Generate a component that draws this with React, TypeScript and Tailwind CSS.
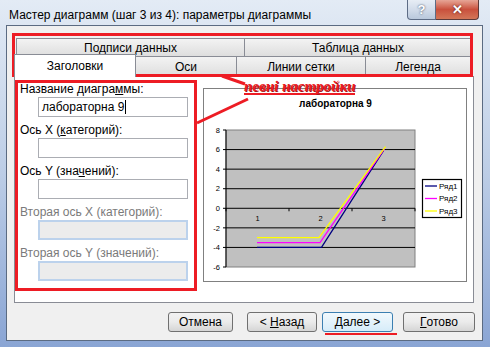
const RED = "#ed1c24";

function Tab({ label, w, h = "h-[18px]", first = false }: { label: string; w: string; h?: string; first?: boolean }) {
  return (
    <div
      className={`${w} ${h} flex items-center justify-center border-t border-r border-[#898c95] bg-gradient-to-b from-[#f3f3f3] to-[#dedede] leading-none ${first ? "border-l" : ""}`}
    >
      {label}
    </div>
  );
}

function Field({ label, value, disabled = false }: { label: React.ReactNode; value?: string; disabled?: boolean }) {
  return (
    <div className="flex flex-col">
      <div className={`h-[15px] leading-[15px] ${disabled ? "text-[#7a7a7a]" : ""}`}>{label}</div>
      <div
        className={`ml-[18px] flex h-[20px] w-[150px] items-center px-[3px] ${
          disabled ? "border-2 border-[#bcd2ec] bg-[#ececec]" : "border border-[#abadb3] bg-white"
        }`}
      >
        {value && (
          <>
            <span>{value}</span>
            <span className="ml-px h-[14px] w-px bg-black" />
          </>
        )}
      </div>
    </div>
  );
}

function Chart() {
  const unit = 137 / 14;
  const yv = (v: number) => 42 + (8 - v) * unit;
  const values = [8, 6, 4, 2, 0, -2, -4, -6];
  const series = [
    { name: "Ряд1", color: "#000080", pts: [[54, -4], [118.5, -4], [180.5, 5.9]] },
    { name: "Ряд2", color: "#ff00ff", pts: [[54, -3.5], [117, -3.5], [181.5, 6.1]] },
    { name: "Ряд3", color: "#ffff00", pts: [[54, -3], [116, -3], [182.5, 6.3]] },
  ];
  return (
    <svg width="264" height="194" className="block" fontFamily="'Liberation Sans', Arial, sans-serif">
      <rect x="0.5" y="0.5" width="263" height="193" fill="white" stroke="#808080" />
      <text x="132.5" y="19" textAnchor="middle" fontSize="10" fontWeight="bold">
        лабораторна 9
      </text>
      <rect x="23" y="42" width="189" height="137" fill="#c0c0c0" stroke="#808080" />
      {values.slice(1, 7).map((v) => (
        <line key={v} x1="23" x2="212" y1={yv(v)} y2={yv(v)} stroke="black" strokeWidth="1" />
      ))}
      <line x1="23" x2="23" y1="42" y2="179" stroke="black" />
      {values.map((v) => (
        <g key={v}>
          <line x1="20" x2="23" y1={yv(v)} y2={yv(v)} stroke="black" />
          <text x="17" y={yv(v) + 2.7} textAnchor="end" fontSize="7.5">
            {v}
          </text>
        </g>
      ))}
      {[23, 86, 149, 212].map((x) => (
        <line key={x} x1={x} x2={x} y1={yv(0)} y2={yv(0) + 3} stroke="black" />
      ))}
      {[1, 2, 3].map((c, i) => (
        <text key={c} x={54.5 + i * 63} y="133" textAnchor="middle" fontSize="7.5">
          {c}
        </text>
      ))}
      {series.map((s) => (
        <polyline
          key={s.name}
          points={s.pts.map(([x, v]) => `${x},${yv(v)}`).join(" ")}
          fill="none"
          stroke={s.color}
          strokeWidth="1.3"
        />
      ))}
      <rect x="219.5" y="91.5" width="39" height="38" fill="white" stroke="black" strokeWidth="1.2" />
      {series.map((s, i) => (
        <g key={s.name}>
          <line x1="222" x2="234" y1={98 + i * 12.5} y2={98 + i * 12.5} stroke={s.color} strokeWidth="1.3" />
          <text x="236" y={100.8 + i * 12.5} fontSize="8">
            {s.name}
          </text>
        </g>
      ))}
    </svg>
  );
}

function Btn({ children, w, focus = false }: { children: React.ReactNode; w: string; focus?: boolean }) {
  return (
    <div
      className={`${w} flex h-[20px] items-center justify-center whitespace-pre rounded-[3px] border leading-none ${
        focus
          ? "border-[#3c7fb1] bg-gradient-to-b from-[#f2f9fd] to-[#d6ecf9]"
          : "border-[#707070] bg-gradient-to-b from-[#f2f2f2] via-[#ebebeb] to-[#d5d5d5]"
      }`}
    >
      {children}
    </div>
  );
}

export default function App() {
  return (
    <div className="relative h-[347px] w-[490px] overflow-hidden bg-gradient-to-b from-[#e3ebf5] via-[#bccde6] to-[#8aa5d4] font-['Liberation_Sans',Arial,sans-serif] text-[12px] text-black">
      {/* title bar */}
      <div className="flex h-[25px] items-start justify-between">
        <span className="ml-[9px] mt-[7px] leading-[16px]">Мастер диаграмм (шаг 3 из 4): параметры диаграммы</span>
        <div className="mr-[11px] flex">
          <div className="flex h-[20px] w-[29px] items-center justify-center rounded-bl-[4px] border border-t-0 border-[#5d6c85] bg-gradient-to-b from-[#e7edf5] via-[#d2dcea] to-[#b9c8dc] text-[13px] font-bold leading-none text-white [text-shadow:0_0_2px_#27374f]">
            ?
          </div>
          <div className="flex h-[20px] w-[43px] items-center justify-center rounded-br-[4px] border border-t-0 border-l-0 border-[#5d3a3a] bg-gradient-to-b from-[#e6a596] via-[#c9503d] to-[#d37658] text-[13px] font-bold leading-none text-white [text-shadow:0_0_2px_#4a1010]">
            ✕
          </div>
        </div>
      </div>

      {/* client area */}
      <div className="ml-[6px] flex h-[316px] w-[477px] flex-col border border-[#5b6b82] bg-[#f0f0f0]">
        <div className="ml-[7px] mt-[12px] w-[460px]">
          <div className="ml-[2px] flex">
            <Tab label="Подписи данных" w="w-[229px]" first />
            <Tab label="Таблица данных" w="w-[227px]" />
          </div>
          <div className="flex items-end">
            <div className="relative z-10 -mb-px -mt-[2px] flex h-[23px] w-[122px] items-center justify-center border-x border-t border-[#898c95] bg-white leading-none">
              Заголовки
            </div>
            <Tab label="Оси" w="w-[101px]" h="h-[20px]" />
            <Tab label="Линии сетки" w="w-[129px]" h="h-[20px]" />
            <Tab label="Легенда" w="w-[105px]" h="h-[20px]" />
          </div>
          <div className="flex h-[227px] w-[460px] border border-[#898c95] bg-white">
            <div className="flex w-[188px] flex-col gap-[6px] pl-[5px] pt-[5px]">
              <Field
                label={
                  <>
                    Название диагра<u>м</u>мы:
                  </>
                }
                value="лабораторна 9"
              />
              <Field
                label={
                  <>
                    Ось X (<u>к</u>атегорий):
                  </>
                }
              />
              <Field
                label={
                  <>
                    Ось Y (зна<u>ч</u>ений):
                  </>
                }
              />
              <Field label="Вторая ось X (категорий):" disabled />
              <Field label="Вторая ось Y (значений):" disabled />
            </div>
            <div className="mt-[11px]">
              <Chart />
            </div>
          </div>
        </div>

        <div className="mt-[9px] flex">
          <div className="ml-[161px] flex">
            <Btn w="w-[65px]">Отмена</Btn>
            <div className="ml-[14px]">
              <Btn w="w-[70px]">
                {"< "}
                <u>Н</u>азад
              </Btn>
            </div>
            <div className="ml-[5px]">
              <Btn w="w-[71px]" focus>
                <u>Д</u>
                {"алее >"}
              </Btn>
            </div>
            <div className="ml-[10px]">
              <Btn w="w-[72px]">
                <u>Г</u>отово
              </Btn>
            </div>
          </div>
        </div>
      </div>

      {/* red annotations */}
      <div className="pointer-events-none absolute left-[12px] top-[33px] h-[44px] w-[461px] border-[3px] border-[#ed1c24]" />
      <div className="pointer-events-none absolute left-[15px] top-[80px] h-[211px] w-[182px] border-[3px] border-[#ed1c24]" />
      <svg className="pointer-events-none absolute left-0 top-0" width="490" height="347">
        <line x1="222" y1="76" x2="245" y2="84" stroke={RED} strokeWidth="3" />
        <line x1="248" y1="99" x2="197" y2="123" stroke={RED} strokeWidth="3" />
      </svg>
      <div className="absolute left-[244px] top-[79px] whitespace-nowrap border-b-2 border-[#ed1c24] font-['Liberation_Serif',serif] text-[15px] font-bold italic leading-[14px] text-[#ed1c24] [text-shadow:1px_1px_0_#9b1b1b]">
        певні настройки
      </div>
      <div className="absolute left-[325px] top-[333px] h-[2px] w-[72px] bg-[#ed1c24]" />
    </div>
  );
}
